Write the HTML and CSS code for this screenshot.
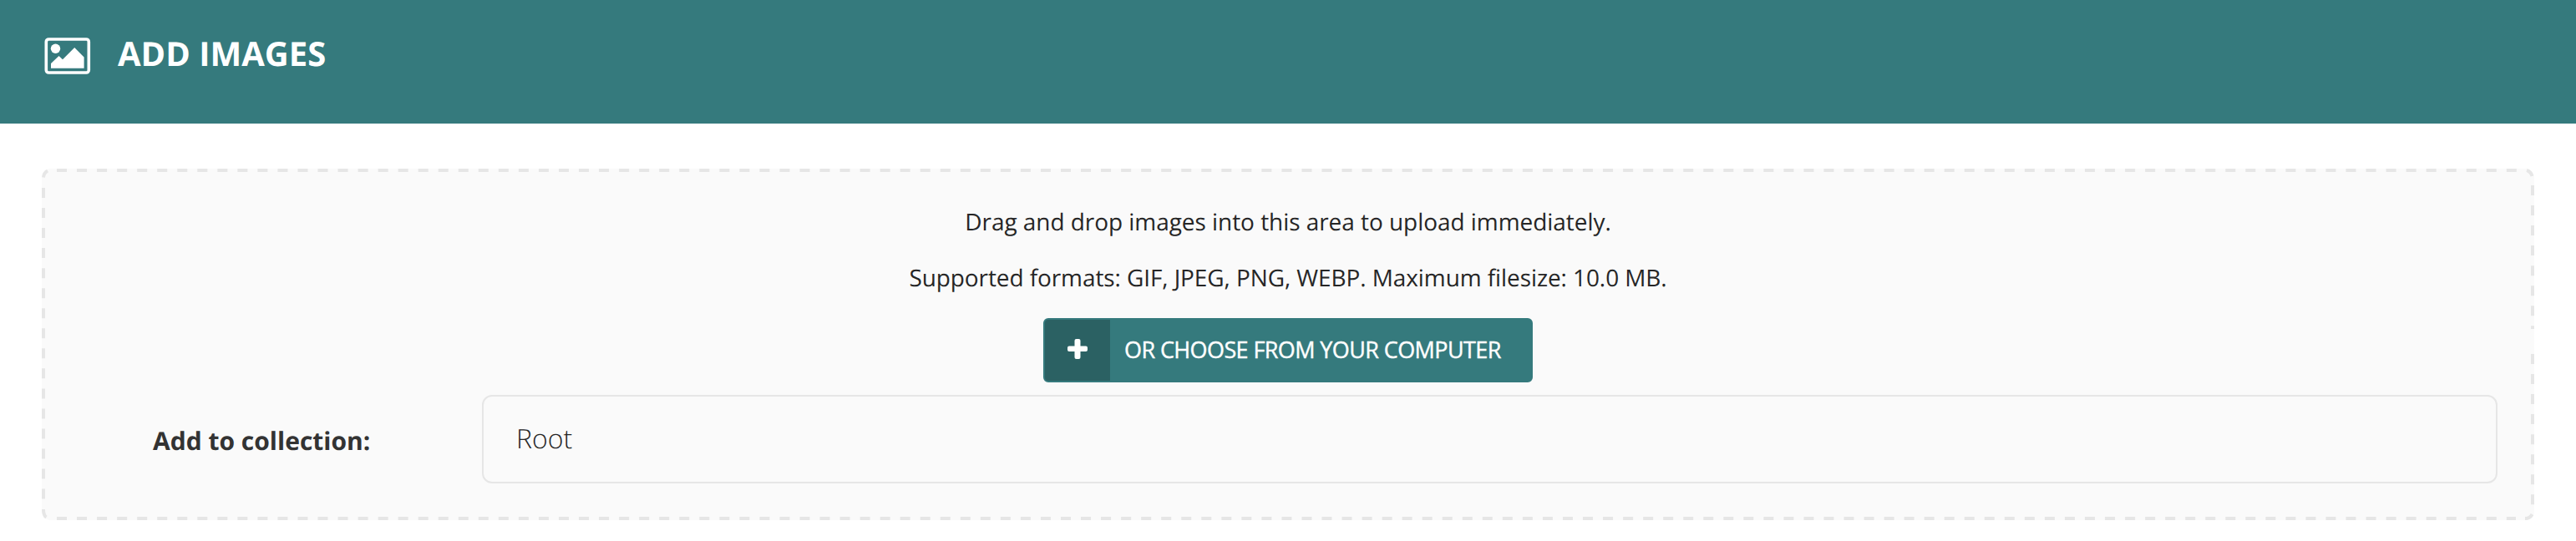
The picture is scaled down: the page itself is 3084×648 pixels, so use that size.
FILE: index.html
```html
<!DOCTYPE html>
<html lang="en">
<head>
<meta charset="utf-8">
<title>Add images</title>
<link rel="stylesheet" href="styles.css">
</head>
<body>
<header class="header">
  <svg class="header-icon" viewBox="0 0 56 44" width="56" height="44" aria-hidden="true">
    <rect x="2.3" y="2" width="51" height="40" rx="3" fill="none" stroke="#fff" stroke-width="3.6"/>
    <circle cx="13.5" cy="13.2" r="5.7" fill="#fff"/>
    <path d="M8 36.7V31L17.5 22L22 26.2L36.2 12L47.6 23.4V36.7Z" fill="#fff"/>
  </svg>
  <h1 class="title">ADD IMAGES</h1>
</header>
<main class="main">
  <form class="drop-zone">
    <svg class="outline" viewBox="0 0 2984 421" width="2984" height="421" aria-hidden="true">
      <path d="M18 2H2964M18 419H2962M2 23V400M2982 20V192M2982 222V404"/>
      <path class="corners" d="M2 10.500Q2.500 5 7 2.500M2975 2Q2980 3.500 2981.500 9M2981.500 414Q2979 419 2973 419M2 408Q2 415.500 5.500 417.500"/>
    </svg>
    <p class="hint">Drag and drop images into this area to upload immediately.</p>
    <p class="hint hint-formats">Supported formats: GIF, JPEG, PNG, WEBP. Maximum filesize: 10.0 MB.</p>
    <button class="choose" type="button">
      <span class="choose-icon">
        <svg viewBox="0 0 24 24" width="24" height="24" aria-hidden="true"><path d="M10.500 0h3q2 0 2 2v6.600h6.500q2 0 2 2v2.400q0 2-2 2h-6.500v7q0 2-2 2h-3q-2 0-2-2v-7h-6.500q-2 0-2-2v-2.400q0-2 2-2h6.500V2q0-2 2-2z" fill="#fff"/></svg>
      </span>
      <span class="choose-label">OR CHOOSE FROM YOUR COMPUTER</span>
    </button>
    <div class="field">
      <span class="field-label">Add to collection:</span>
      <div class="select">Root</div>
    </div>
  </form>
</main>
</body>
</html>
```
FILE: styles.css
```css
* { box-sizing: border-box; }
body {
  margin: 0;
  background: #fff;
  color: #262626;
  font-family: "Open Sans", sans-serif;
  text-rendering: geometricPrecision;
}
.header {
  display: flex;
  align-items: flex-start;
  height: 148px;
  padding: 44.500px 53px 0;
  background: #357a7d;
}
.header-icon { flex: none; }
.title {
  margin: -10.500px 0 0 32px;
  color: #fff;
  font-size: 40px;
  font-weight: 700;
  line-height: 60px;
}
.main { padding: 54px 50px 0; }
.drop-zone {
  position: relative;
  display: flex;
  flex-direction: column;
  align-items: center;
  height: 421px;
  padding: 44px 44px 0;
  border-radius: 10px;
  background: #fafafa;
}
/* dashed frame over the panel edge */
.outline {
  position: absolute;
  top: 0;
  left: 0;
  fill: none;
  stroke: #e6e6e6;
  stroke-width: 4px;
  stroke-dasharray: 12 12.040;
  pointer-events: none;
}
.corners { stroke-dasharray: none; }
.hint {
  margin: 0 0 26px;
  font-size: 28px;
  letter-spacing: -0.05px;
  line-height: 41px;
}
.hint-formats { letter-spacing: -0.09px; }
.choose {
  display: flex;
  align-items: stretch;
  width: 586px;
  height: 77px;
  margin: 1px 0 15px;
  padding: 0;
  border: 2px solid #357a7d;
  border-radius: 6px;
  background: #357a7d;
  color: #fff;
  font: 500 27px/72px "Open Sans", sans-serif;
  letter-spacing: -0.6px;
  -webkit-text-stroke: 0.4px #fff;
}
.choose-icon {
  display: flex;
  align-items: center;
  justify-content: center;
  width: 78px;
  padding: 0 1px 3px 0;
  border-radius: 4px 0 0 4px;
  background: #2b6163;
}
.choose-label { padding-left: 17px; white-space: nowrap; }
.field {
  display: flex;
  align-self: stretch;
}
.field-label {
  width: 483px;
  padding: 0 0 0 89px;
  color: #333;
  font-size: 30px;
  font-weight: 700;
  line-height: 110px;
}
.select {
  flex: 1;
  height: 106px;
  padding: 0 39px;
  border: 2px solid #e6e6e6;
  border-radius: 12px;
  font-size: 32px;
  font-weight: 300;
  line-height: 102px;
}
```
